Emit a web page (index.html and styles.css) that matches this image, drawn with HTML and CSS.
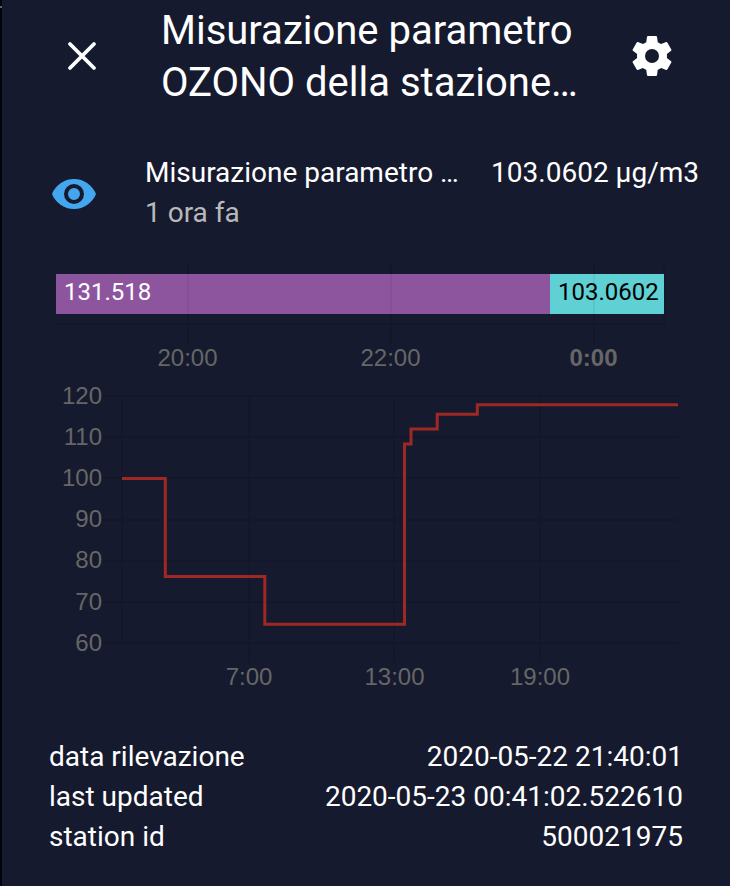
FILE: index.html
```html
<!DOCTYPE html>
<html lang="it">
<head>
<meta charset="utf-8">
<title>Misurazione parametro OZONO</title>
<link rel="stylesheet" href="styles.css">
</head>
<body>
<main class="dialog">
  <header class="toolbar">
    <svg class="icon" viewBox="0 0 24 24" aria-label="Chiudi"><path class="close" d="M18,6L6,18M6,6L18,18"/></svg>
    <h1 class="title">Misurazione parametro<br>OZONO della stazione…</h1>
    <svg class="icon" viewBox="0 0 24 24" aria-label="Impostazioni"><path d="M12,15.5A3.5,3.5 0 0,1 8.5,12A3.5,3.5 0 0,1 12,8.5A3.5,3.5 0 0,1 15.5,12A3.5,3.5 0 0,1 12,15.5M19.43,12.97C19.47,12.65 19.5,12.33 19.5,12C19.5,11.67 19.47,11.34 19.43,11L21.54,9.37C21.73,9.22 21.78,8.95 21.66,8.73L19.66,5.27C19.54,5.05 19.27,4.96 19.05,5.05L16.56,6.05C16.04,5.66 15.5,5.32 14.87,5.07L14.5,2.42C14.46,2.18 14.25,2 14,2H10C9.75,2 9.54,2.18 9.5,2.42L9.13,5.07C8.5,5.32 7.96,5.66 7.44,6.05L4.95,5.05C4.73,4.96 4.46,5.05 4.34,5.27L2.34,8.73C2.21,8.95 2.27,9.22 2.46,9.37L4.57,11C4.53,11.34 4.5,11.67 4.5,12C4.5,12.33 4.53,12.65 4.57,12.97L2.46,14.63C2.27,14.78 2.21,15.05 2.34,15.27L4.34,18.73C4.46,18.95 4.73,19.03 4.95,18.95L7.44,17.94C7.96,18.34 8.5,18.68 9.13,18.93L9.5,21.58C9.54,21.82 9.75,22 10,22H14C14.25,22 14.46,21.82 14.5,21.58L14.87,18.93C15.5,18.67 16.04,18.34 16.56,17.94L19.05,18.95C19.27,19.03 19.54,18.95 19.66,18.73L21.66,15.27C21.78,15.05 21.73,14.78 21.54,14.63L19.43,12.97Z"/></svg>
  </header>

  <section class="state">
    <svg class="icon eye" viewBox="0 0 24 24"><path d="M12,9A3,3 0 0,0 9,12A3,3 0 0,0 12,15A3,3 0 0,0 15,12A3,3 0 0,0 12,9M12,17A5,5 0 0,1 7,12A5,5 0 0,1 12,7A5,5 0 0,1 17,12A5,5 0 0,1 12,17M12,4.5C7,4.5 2.73,7.61 1,12C2.73,16.39 7,19.5 12,19.5C17,19.5 21.27,16.39 23,12C21.27,7.61 17,4.5 12,4.5Z"/></svg>
    <div class="info">
      <div class="name">Misurazione parametro …</div>
      <div class="ago">1 ora fa</div>
    </div>
    <div class="value">103.0602 µg/m3</div>
  </section>

  <svg class="chart" viewBox="0 254 728 446">
    <g transform="translate(-2 0)">
      <path class="grid" d="M188 264V344M391 264V344M594 264V344M664 264V324M55 324H665"/>
      <rect class="purple" x="56" y="274" width="494" height="40"/>
      <rect class="cyan" x="550" y="274" width="114" height="40"/>
      <path class="grid faint" d="M188 274V314M391 274V314M594 274V314"/>
      <text class="bar-label light" x="64" y="300">131.518</text>
      <text class="bar-label" x="558" y="300">103.0602</text>
      <g class="tick mid">
        <text x="187.500" y="366">20:00</text>
        <text x="390.500" y="366">22:00</text>
        <text class="bold" x="593.500" y="366">0:00</text>
      </g>
      <path class="grid" d="M102 396H678M102 437H678M102 478H678M102 520H678M102 561H678M102 602H678M102 643H678M122 396V643M249 396V663M394 396V663M540 396V663"/>
      <path class="line" d="M122 478.500H165.300V576.500H264.800V624.300H404.500V444H411V429H437.200V414.300H477.300V404.700H678"/>
      <g class="tick end">
        <text x="102" y="404">120</text>
        <text x="102" y="445">110</text>
        <text x="102" y="486">100</text>
        <text x="102" y="527">90</text>
        <text x="102" y="568">80</text>
        <text x="102" y="610">70</text>
        <text x="102" y="651">60</text>
      </g>
      <g class="tick mid">
        <text x="249" y="685">7:00</text>
        <text x="394.500" y="685">13:00</text>
        <text x="540" y="685">19:00</text>
      </g>
    </g>
  </svg>

  <dl class="attributes">
    <div class="row"><dt>data rilevazione</dt><dd>2020-05-22 21:40:01</dd></div>
    <div class="row"><dt>last updated</dt><dd>2020-05-23 00:41:02.522610</dd></div>
    <div class="row"><dt>station id</dt><dd>500021975</dd></div>
  </dl>
</main>
</body>
</html>
```
FILE: styles.css
```css
* { box-sizing: border-box; }

body {
  margin: 0;
  background: linear-gradient(#02040c 6px, #666 6px, #666 8px, #02040c 8px) no-repeat #02040c;
  color: #fff;
  font-family: Roboto, sans-serif;
  font-size: 28px;
  line-height: 40px;
}

.dialog {
  height: 886px;
  margin-left: 2px;
  background: #161a2e;
  overflow: hidden;
}

.icon {
  width: 48px;
  height: 48px;
  flex: none;
  fill: #fff;
}

.close {
  stroke: #fff;
  stroke-width: 1.9;
  stroke-linecap: round;
}

.toolbar {
  display: flex;
  align-items: center;
  height: 112px;
  padding: 0 54px 0 56px;
}

.title {
  flex: 1;
  margin: 0 0 0 55px;
  padding-top: 2px;
  font-size: 40px;
  font-weight: 400;
  line-height: 52px;
  white-space: nowrap;
}

.state {
  display: flex;
  height: 142px;
  padding: 41px 31px 0 48px;
  white-space: nowrap;
}

.eye {
  margin-top: 17px;
  fill: #44a6ef;
}

.info {
  flex: 1;
  margin-left: 47px;
}

.ago { color: #b9b9b9; }

.chart {
  display: block;
  width: 728px;
  height: 446px;
}

.purple { fill: #8e559f; }
.cyan { fill: #5fd0d3; }

.grid {
  fill: none;
  stroke: rgba(0, 0, 0, 0.1);
  stroke-width: 2;
}

.faint { stroke: rgba(0, 0, 0, 0.05); }

.line {
  fill: none;
  stroke: #a02822;
  stroke-width: 3;
}

.bar-label {
  font-size: 24px;
  fill: #000;
}

.light { fill: #fff; }

.tick {
  font-family: "Liberation Sans", sans-serif;
  font-size: 24px;
  fill: #666;
}

.mid { text-anchor: middle; }
.end { text-anchor: end; }
.bold { font-weight: 700; }

.attributes {
  margin: 0;
  padding: 37px 47px 0 47px;
}

.row {
  display: flex;
  justify-content: space-between;
}

dd { margin: 0; }
```
